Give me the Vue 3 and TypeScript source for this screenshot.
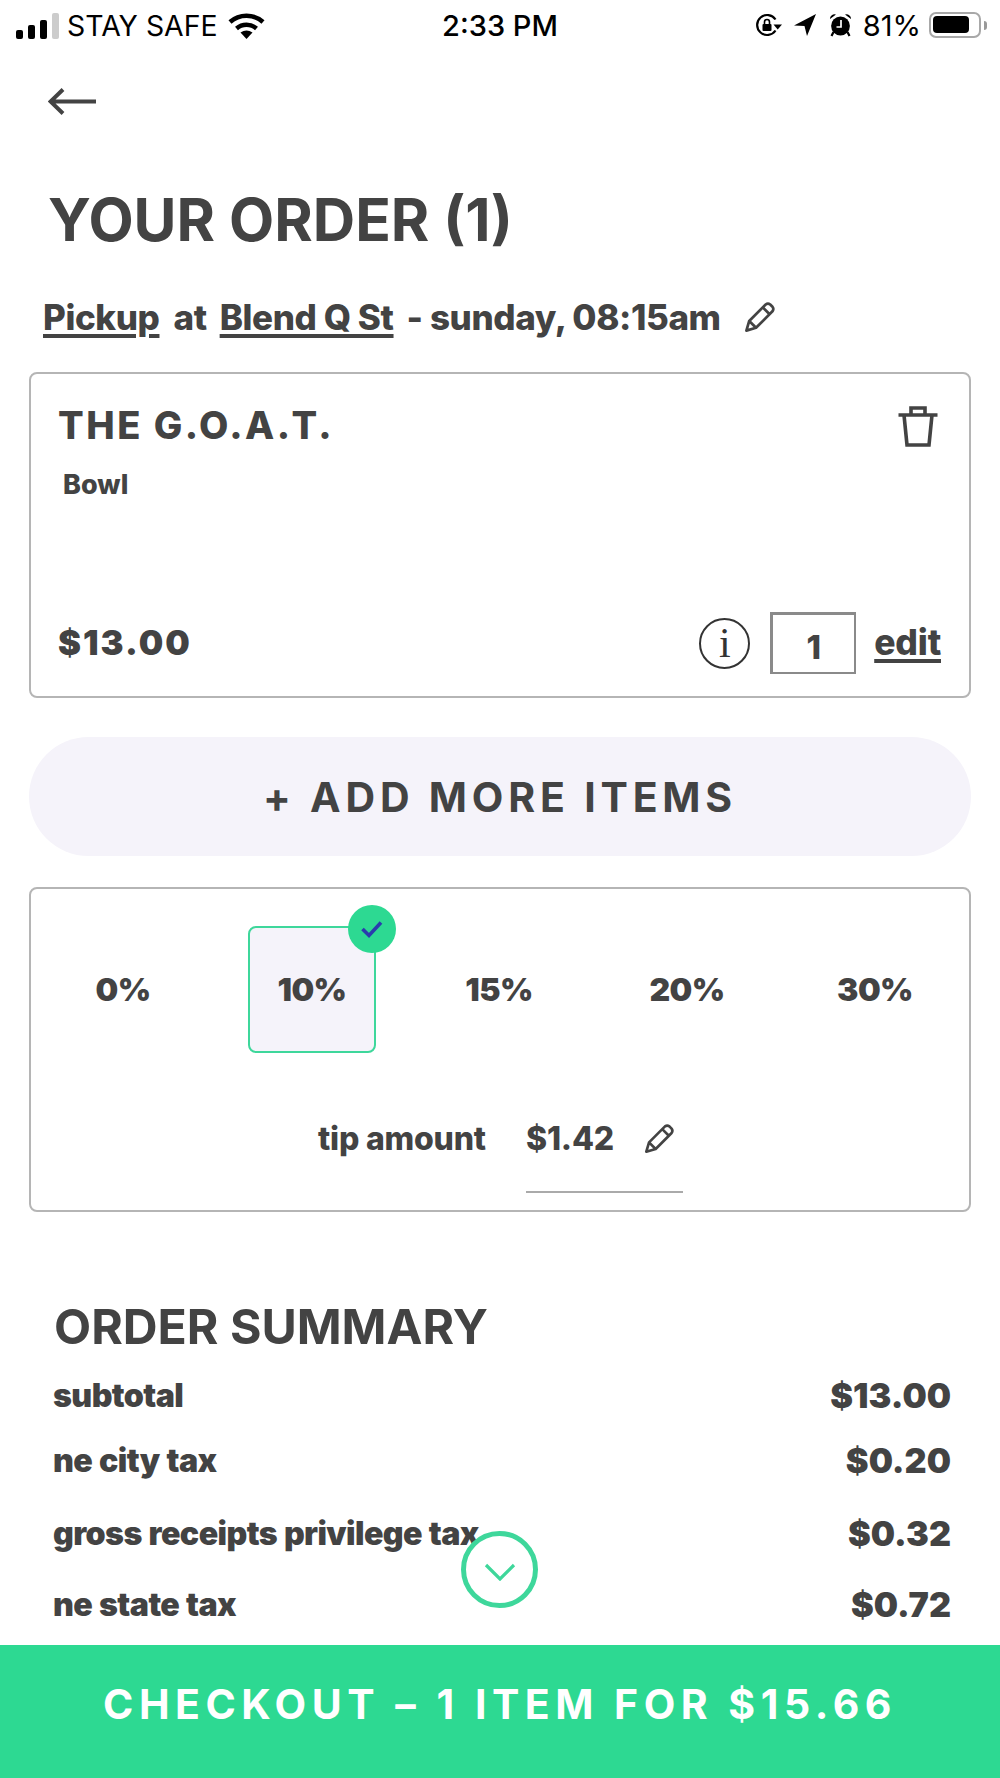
<script setup lang="ts">
interface Row { label: string; value: string; cls: string }
const tips: string[] = ['0%', '10%', '15%', '20%', '30%']
const selectedTip = '10%'
const rows: Row[] = [
  { label: 'subtotal', value: '$13.00', cls: 'r1' },
  { label: 'ne city tax', value: '$0.20', cls: 'r2' },
  { label: 'gross receipts privilege tax', value: '$0.32', cls: 'r3' },
  { label: 'ne state tax', value: '$0.72', cls: 'r4' }
]
</script>

<template>
  <div class="app">
    <header class="status">
      <div class="st-left">
        <div class="bars"><i class="b1"></i><i class="b2"></i><i class="b3"></i><i class="b4"></i></div>
        <span class="carrier">STAY SAFE</span>
        <svg class="wifi" width="37" height="27" viewBox="0 0 37 27">
          <path d="M2 10 A25 25 0 0 1 35 10" fill="none" stroke="#000" stroke-width="4.6" />
          <path d="M8.5 16.5 A15 15 0 0 1 28.5 16.5" fill="none" stroke="#000" stroke-width="4.4" />
          <path d="M12.5 20.5 Q18.5 16.5 24.5 20.5 L18.5 27 Z" fill="#000" />
        </svg>
      </div>
      <span class="time">2:33 PM</span>
      <div class="st-right">
        <svg class="rot" width="27" height="24" viewBox="0 0 27 24">
          <path d="M20.5 17.5 A10 10 0 1 1 20.5 6.5" fill="none" stroke="#000" stroke-width="2.2" />
          <path d="M18.5 11.5 H27 L22.7 16.5 Z" fill="#000" />
          <rect x="7.5" y="11" width="9" height="7" rx="1" fill="#000" />
          <path d="M9.5 11 V9 A2.5 2.5 0 0 1 14.5 9 V11" fill="none" stroke="#000" stroke-width="1.6" />
        </svg>
        <svg class="loc" width="22" height="22" viewBox="0 0 22 22">
          <path d="M0 11.5 L22 0 L13 22 L10.5 12 Z" fill="#000" />
        </svg>
        <svg class="alarm" width="23" height="24" viewBox="0 0 23 24">
          <circle cx="11.5" cy="13" r="9.4" fill="#000" />
          <path d="M1 6 A4.4 4.4 0 0 1 7 1.6 Z M22 6 A4.4 4.4 0 0 0 16 1.6 Z" fill="#000" />
          <path d="M4.5 19 L2.5 23 M18.5 19 L20.5 23" stroke="#000" stroke-width="2.2" />
          <path d="M12 7 V14 H7.5" fill="none" stroke="#fff" stroke-width="1.7" />
        </svg>
        <span class="pct">81%</span>
        <div class="battery"><div class="fill"></div></div>
        <i class="nub"></i>
      </div>
    </header>

    <main class="main">
      <svg class="back" width="49" height="27" viewBox="0 0 49 27">
        <path d="M48 13.5 H3 M15 1.5 L2.5 13.5 L15 25.5" fill="none" stroke="#434343" stroke-width="4" />
      </svg>

      <h1 class="title">YOUR ORDER (1)</h1>

      <div class="pickup">
        <span class="link">Pickup</span>
        <span class="at">at</span>
        <span class="link">Blend Q St</span>
        <span class="when">- sunday, 08:15am</span>
        <svg class="pencil big" width="34" height="34" viewBox="0 0 30 30">
          <path d="M3 27 L5.5 18.5 L20 4 Q22 2.5 24 4 L26 6 Q27.5 8 26 10 L11.5 24.5 Z M17.5 6.5 L23.5 12.5 M5.5 18.5 L11.5 24.5" fill="none" stroke="#434343" stroke-width="2.4" stroke-linejoin="round" />
        </svg>
      </div>

      <section class="card item">
        <div class="item-head">
          <h2 class="item-name">THE G.O.A.T.</h2>
          <svg class="trash" width="40" height="42" viewBox="0 0 40 42">
            <path d="M0.5 10 H39.5 M13 10 V3 H27 V10 M6 10 L9 40 H31 L34 10" fill="none" stroke="#434343" stroke-width="3.6" />
          </svg>
        </div>
        <div class="item-kind">Bowl</div>
        <div class="item-foot">
          <span class="price">$13.00</span>
          <div class="controls">
            <span class="info">i</span>
            <span class="qty">1</span>
            <span class="edit">edit</span>
          </div>
        </div>
      </section>

      <button class="add">+ ADD MORE ITEMS</button>

      <section class="card tipcard">
        <div class="tips">
          <div v-for="t in tips" :key="t" class="tipcol">
            <div class="tip" :class="{ on: t === selectedTip }">
              <span class="tiptext">{{ t }}</span>
              <span v-if="t === selectedTip" class="badge">
                <svg width="24" height="20" viewBox="0 0 24 20">
                  <path d="M2.5 10 L9 16.5 L21 3.5" fill="none" stroke="#2a3cae" stroke-width="3.6" />
                </svg>
              </span>
            </div>
          </div>
        </div>
        <div class="tiprow">
          <span class="tiplabel">tip amount</span>
          <div class="tipvalue">
            <span>$1.42</span>
            <svg class="pencil" width="33" height="33" viewBox="0 0 30 30">
              <path d="M3 27 L5.5 18.5 L20 4 Q22 2.5 24 4 L26 6 Q27.5 8 26 10 L11.5 24.5 Z M17.5 6.5 L23.5 12.5 M5.5 18.5 L11.5 24.5" fill="none" stroke="#434343" stroke-width="2.4" stroke-linejoin="round" />
            </svg>
          </div>
        </div>
      </section>

      <h2 class="summary">ORDER SUMMARY</h2>
      <div v-for="r in rows" :key="r.label" class="row" :class="r.cls">
        <span class="rlabel">{{ r.label }}</span>
        <span class="rvalue">{{ r.value }}</span>
      </div>
    </main>

    <button class="scroll" aria-label="scroll down">
      <svg width="32" height="18" viewBox="0 0 32 18">
        <path d="M2 2 L16 16 L30 2" fill="none" stroke="#3ed79b" stroke-width="3.2" />
      </svg>
    </button>

    <button class="checkout">CHECKOUT – 1 ITEM FOR $15.66</button>
  </div>
</template>

<style>
html, body { margin: 0; background: #fff; }
</style>

<style scoped>
.app {
  position: relative;
  width: 1000px;
  height: 1778px;
  display: flex;
  flex-direction: column;
  overflow: hidden;
  background: #fff;
  color: #434343;
  font-family: Inter, "Liberation Sans", sans-serif;
}
.status {
  height: 50px;
  flex: none;
  display: grid;
  grid-template-columns: 1fr auto 1fr;
  align-items: center;
  color: #000;
}
.st-left { display: flex; align-items: center; padding-left: 16px; }
.bars { display: flex; align-items: flex-end; gap: 5px; height: 27px; }
.bars i { display: block; width: 7px; border-radius: 2px; background: #000; }
.b1 { height: 9px; }
.b2 { height: 14px; }
.b3 { height: 19px; }
.bars .b4 { height: 26px; background: #ccc; }
.carrier { font-size: 28.4px; line-height: 32px; margin: 2px 0 0 8px; }
.wifi { margin-left: 10px; }
.time { font-size: 29px; line-height: 32px; font-weight: 500; margin-top: 2px; }
.st-right { display: flex; align-items: center; justify-content: flex-end; padding-right: 13px; }
.rot { margin-right: 12px; }
.loc { margin-right: 13px; }
.alarm { margin-right: 11px; }
.pct { font-size: 29px; line-height: 32px; margin: 2px 8px 0 0; }
.battery {
  width: 52px;
  height: 26px;
  box-sizing: border-box;
  border: 2.5px solid #a8a8a8;
  border-radius: 7px;
  padding: 2px;
}
.fill { width: 36px; height: 17px; background: #000; border-radius: 4px; }
.nub { display: block; width: 3px; height: 9px; margin-left: 3px; background: #999; border-radius: 0 3px 3px 0; }

.main { flex: 1; min-height: 0; overflow: hidden; display: flex; flex-direction: column; }
.back { display: block; margin: 38px 0 0 48px; flex: none; }
.title {
  margin: 75px 0 0 48px;
  font-size: 58.7px;
  line-height: 60px;
  font-weight: 700;
  white-space: nowrap;
}
.pickup {
  margin: 47px 0 0 43px;
  height: 40px;
  display: flex;
  align-items: center;
  font-size: 35px;
  line-height: 40px;
  font-weight: 800;
  letter-spacing: -0.4px;
  white-space: pre;
}
.link { text-decoration: underline; text-decoration-thickness: 3.5px; text-underline-offset: 4px; }
.at { margin-left: 14px; }
.pickup .link + .at + .link { margin-left: 13px; }
.when { margin-left: 13px; }
.pencil.big { margin-left: 22px; }

.card {
  margin: 35px 29px 0;
  box-sizing: border-box;
  border: 2px solid #b5b5b5;
  border-radius: 8px;
  flex: none;
}
.item {
  height: 326px;
  padding: 29px 28px 22px 27px;
  display: flex;
  flex-direction: column;
}
.item-head { display: flex; justify-content: space-between; align-items: flex-start; }
.item-name { margin: 0; font-size: 38px; line-height: 44px; font-weight: 800; letter-spacing: 2.5px; }
.trash { margin-top: 2px; margin-right: 3px; }
.item-kind { margin: 23px 0 0 5px; font-size: 27px; line-height: 30px; font-weight: 800; }
.item-foot { margin-top: auto; display: flex; justify-content: space-between; align-items: center; }
.price { font-size: 34.5px; font-weight: 900; letter-spacing: 2px; line-height: 40px; }
.controls { display: flex; align-items: center; }
.info {
  width: 51px;
  height: 51px;
  box-sizing: border-box;
  border: 2px solid #333;
  border-radius: 50%;
  display: flex;
  align-items: center;
  justify-content: center;
  font-family: "Liberation Serif", serif;
  font-size: 42px;
  font-weight: 400;
  color: #333;
}
.qty {
  width: 86px;
  height: 62px;
  margin-left: 20px;
  box-sizing: border-box;
  border: 2px solid #8a8a8a;
  border-top-width: 3.5px;
  border-left-width: 3.5px;
  display: flex;
  align-items: center;
  justify-content: center;
  padding-top: 7px;
  font-size: 33px;
  font-weight: 800;
}
.edit {
  margin-left: 18px;
  font-size: 35.5px;
  line-height: 40px;
  font-weight: 800;
  letter-spacing: -0.2px;
  text-decoration: underline;
  text-decoration-thickness: 3.5px;
  text-underline-offset: 4px;
}

.add {
  margin: 39px 29px 0;
  height: 119px;
  flex: none;
  border: 0;
  border-radius: 60px;
  background: #f5f3fa;
  color: #434343;
  font-family: inherit;
  font-size: 41px;
  font-weight: 700;
  letter-spacing: 4.8px;
}

.tipcard { margin-top: 31px; height: 325px; padding-top: 37px; }
.tips {
  display: grid;
  grid-template-columns: repeat(5, 188px);
  justify-content: center;
  padding-right: 2px;
}
.tipcol { display: flex; justify-content: center; }
.tip {
  position: relative;
  width: 128px;
  height: 127px;
  box-sizing: border-box;
  display: flex;
  align-items: center;
  justify-content: center;
  font-size: 32px;
  font-weight: 900;
  letter-spacing: -0.6px;
  border: 2.5px solid transparent;
  border-radius: 8px;
}
.tip.on { border-color: #3ed79b; background: #f5f3fa; transform: translateX(1px); }
.badge {
  position: absolute;
  top: -23px;
  right: -22px;
  width: 48px;
  height: 48px;
  border-radius: 50%;
  background: #2dd992;
  display: flex;
  align-items: center;
  justify-content: center;
}
.tiprow {
  margin-top: 66px;
  padding-left: 287px;
  display: flex;
  align-items: flex-start;
  font-size: 32px;
  line-height: 40px;
  font-weight: 800;
  letter-spacing: -0.2px;
}
.tiplabel { width: 208px; }
.tipvalue {
  width: 157px;
  height: 74px;
  box-sizing: border-box;
  border-bottom: 2px solid #aaa;
  display: flex;
  align-items: flex-start;
}
.tipvalue .pencil { margin: 3px 0 0 29px; }

.summary {
  margin: 90px 0 0 54px;
  font-size: 48.2px;
  line-height: 50px;
  font-weight: 700;
}
.row {
  flex: none;
  display: flex;
  justify-content: space-between;
  align-items: center;
  height: 40px;
  padding: 0 49px 0 53px;
}
.r1 { margin-top: 23px; }
.r2 { margin-top: 25px; }
.r3 { margin-top: 33px; }
.r4 { margin-top: 31px; }
.rlabel { font-size: 32.2px; font-weight: 900; letter-spacing: -0.6px; word-spacing: 1px; }
.rvalue { font-size: 34.2px; font-weight: 900; }

.scroll {
  position: absolute;
  left: 461px;
  top: 1531px;
  width: 77px;
  height: 77px;
  box-sizing: border-box;
  padding: 4px 0 0;
  border: 5px solid #3ed79b;
  border-radius: 50%;
  background: #fff;
  display: flex;
  align-items: center;
  justify-content: center;
}
.checkout {
  flex: none;
  height: 133px;
  border: 0;
  background: #2dd992;
  color: #fff;
  font-family: inherit;
  font-size: 41px;
  font-weight: 700;
  letter-spacing: 5.5px;
  padding-bottom: 16px;
}
</style>
